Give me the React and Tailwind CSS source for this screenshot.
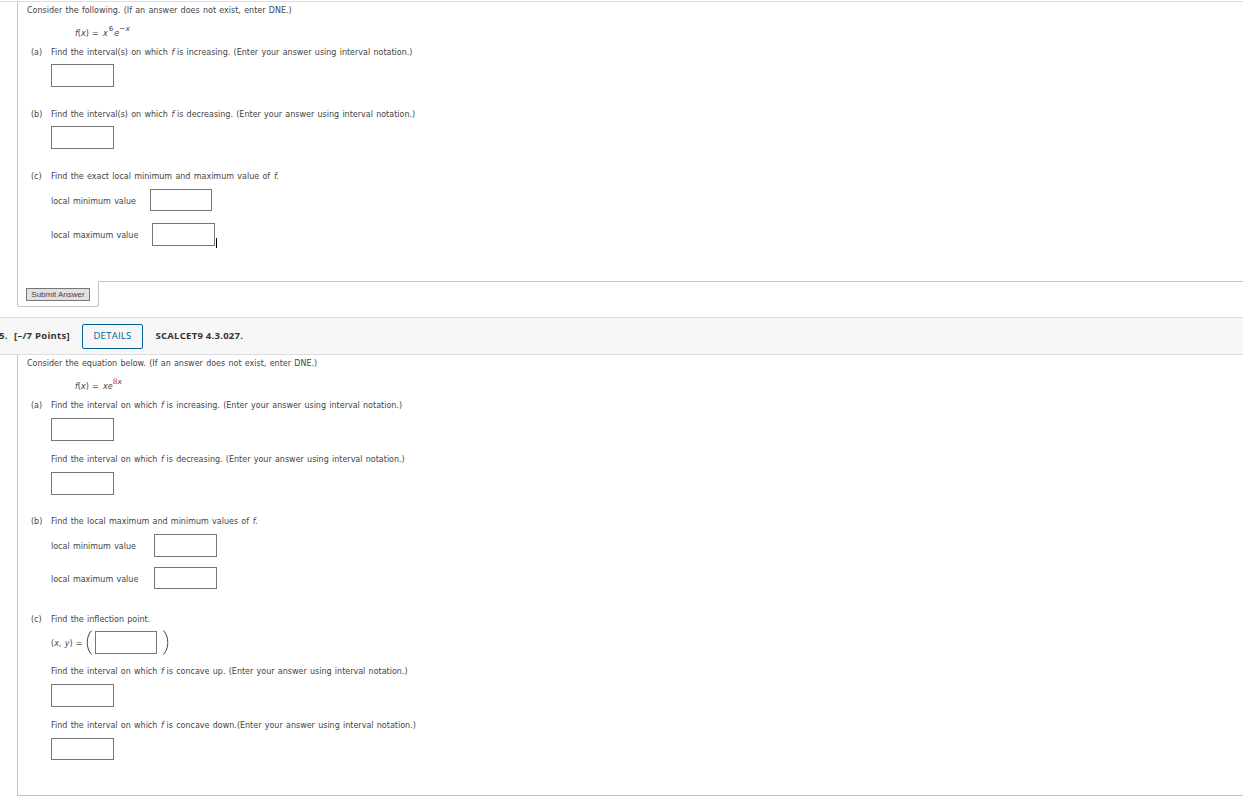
import React from "react";

/* ─── Shared pieces ───────────────────────────────────────────── */
function Line({ className = "", children }) {
  return <div className={`h-3 leading-[14px] whitespace-pre ${className}`}>{children}</div>;
}

function AnswerBox({ className = "" }) {
  return (
    <input
      type="text"
      className={`block shrink-0 border border-[#767676] bg-white outline-none ${className}`}
    />
  );
}

function Part({ label, className = "", children }) {
  return (
    <div className={`flex pl-[13px] ${className}`}>
      <div className="h-3 w-5 shrink-0 leading-[14px]">{label}</div>
      <div>{children}</div>
    </div>
  );
}

function ValueRow({ label, labelClass, boxClass, className = "", children }) {
  return (
    <div className={`flex items-center ${className}`}>
      <div className={`h-3 shrink-0 leading-[15px] whitespace-pre ${labelClass}`}>{label}</div>
      <AnswerBox className={boxClass} />
      {children}
    </div>
  );
}

function Paren({ d }) {
  return (
    <svg width="6" height="25" viewBox="0 0 6 25" fill="none" stroke="#444" strokeWidth="1" className="shrink-0">
      <path d={d} />
    </svg>
  );
}

const F = () => <i className="ml-[0.500px] -mr-[0.700px]">f</i>;

/* ─── Question 4 ──────────────────────────────────────────────── */
function FirstQuestion() {
  return (
    <section className="h-[316px] border-t border-[#ddd]">
      <div className="ml-[17px] h-[279px] border-l border-[#c4c4c4] pt-0.5">
        <Line className="pl-[9px]">Consider the following. (If an answer does not exist, enter DNE.)</Line>
        <Line className="mt-[11px] pl-[57px]">
          <i>f</i>(<i>x</i>) = <i className="ml-px">x</i>
          <span className="relative -top-[5px] ml-px text-[7px]">6</span>
          <i className="ml-px">e</i>
          <span className="relative -top-[5px] text-[7.500px]">−<i>x</i></span>
        </Line>
        <Part label="(a)" className="mt-[7px]">
          <Line>Find the interval(s) on which <F /> is increasing. (Enter your answer using interval notation.)</Line>
          <AnswerBox className="mt-1.5 h-[23px] w-[63px]" />
        </Part>
        <Part label="(b)" className="mt-[21px]">
          <Line>Find the interval(s) on which <F /> is decreasing. (Enter your answer using interval notation.)</Line>
          <AnswerBox className="mt-1.5 h-[23px] w-[63px]" />
        </Part>
        <Part label="(c)" className="mt-[21px]">
          <Line>Find the exact local minimum and maximum value of <F />.</Line>
          <ValueRow label="local minimum value" labelClass="w-[99px]" boxClass="h-[22px] w-[62px]" className="mt-[7px]" />
          <ValueRow label="local maximum value" labelClass="w-[101px] -mt-px" boxClass="h-[23px] w-[63px]" className="mt-3">
            <span className="relative top-2 ml-px h-2.5 w-px bg-black" />
          </ValueRow>
        </Part>
      </div>
      <div className="ml-[17px] flex h-[26px] items-start">
        <div className="h-[26px] w-[82px] rounded-b-[3px] border border-t-0 border-[#c4c4c4] pt-[7px] pl-2">
          <button className="block h-[13px] w-16 border border-[#767676] bg-[#e1e1e1] font-['Liberation_Sans',Arial,sans-serif] text-[8px] leading-[11px] whitespace-nowrap text-[#444] [word-spacing:0]">
            Submit Answer
          </button>
        </div>
        <div className="h-px grow bg-[#c4c4c4]" />
      </div>
    </section>
  );
}

/* ─── Question header bar ─────────────────────────────────────── */
function QuestionHeader() {
  return (
    <header className="flex h-[38px] items-center border-y border-[#ddd] bg-[#f7f7f7] font-['Open_Sans',sans-serif] text-[9.500px] font-bold tracking-[0.260px] whitespace-pre text-[#333] [word-spacing:0]">
      <span className="w-3.5 shrink-0 -indent-px">5.</span>
      <span className="w-[68px] shrink-0">[–/7 Points]</span>
      <button className="h-[25px] w-[61px] rounded-[2px] border border-[#006298] font-normal text-[#006298]">
        DETAILS
      </button>
      <span className="ml-[12.500px]">SCALCET9 4.3.027.</span>
    </header>
  );
}

/* ─── Question 5 ──────────────────────────────────────────────── */
function SecondQuestion() {
  return (
    <section className="ml-[17px] h-[441px] border-b border-l border-[#c4c4c4] pt-0.5">
      <Line className="pl-[9px]">Consider the equation below. (If an answer does not exist, enter DNE.)</Line>
      <Line className="mt-[11px] pl-[57px]">
        <i>f</i>(<i>x</i>) = <i className="ml-px">xe</i>
        <span className="relative -top-[5px] text-[7.500px]">
          <span className="text-[#e8407a]">8</span>
          <i>x</i>
        </span>
      </Line>
      <Part label="(a)" className="mt-[7px]">
        <Line>Find the interval on which <F /> is increasing. (Enter your answer using interval notation.)</Line>
        <AnswerBox className="mt-[7px] h-[23px] w-[63px]" />
        <Line className="mt-3">Find the interval on which <F /> is decreasing. (Enter your answer using interval notation.)</Line>
        <AnswerBox className="mt-[7px] h-[23px] w-[63px]" />
      </Part>
      <Part label="(b)" className="mt-5">
        <Line>Find the local maximum and minimum values of <F />.</Line>
        <ValueRow label="local minimum value" labelClass="w-[103px] -mt-px" boxClass="h-[23px] w-[63px]" className="mt-[7px]" />
        <ValueRow label="local maximum value" labelClass="w-[103px]" boxClass="h-[22px] w-[63px]" className="mt-2.5" />
      </Part>
      <Part label="(c)" className="mt-6">
        <Line>Find the inflection point.</Line>
        <div className="mt-[5px] flex h-[25px] items-center">
          <Line className="w-[35px]">(<i>x</i>, <i>y</i>) =</Line>
          <Paren d="M5.500 .5C-.2 6.500-.2 18.500 5.500 24.500" />
          <AnswerBox className="ml-[3px] h-[23px] w-[62px]" />
          <span className="w-1.5" />
          <Paren d="M.5 .5C6.200 6.500 6.200 18.500 .5 24.500" />
        </div>
        <Line className="mt-2.5">Find the interval on which <F /> is concave up. (Enter your answer using interval notation.)</Line>
        <AnswerBox className="mt-[7px] h-[23px] w-[63px]" />
        <Line className="mt-3">Find the interval on which <F /> is concave down.(Enter your answer using interval notation.)</Line>
        <AnswerBox className="mt-[7px] h-[22px] w-[63px]" />
      </Part>
    </section>
  );
}

/* ─── Assignment page ─────────────────────────────────────────── */
export default function App() {
  return (
    <main className="h-[796px] overflow-hidden bg-white pt-px font-['DejaVu_Sans',sans-serif] text-[8px] text-[#444] [word-spacing:0.720px]">
      <FirstQuestion />
      <QuestionHeader />
      <SecondQuestion />
    </main>
  );
}
